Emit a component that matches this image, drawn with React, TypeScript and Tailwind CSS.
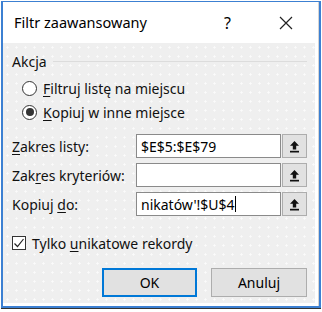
import React from 'react';

function RefButton() {
  return (
    <div className="w-[25px] h-[24px] ml-px flex items-center justify-center bg-[#e1e1e1] border border-[#adadad]">
      <svg width="11" height="13" viewBox="0 0 11 13">
        <path d="M5.5 1 L10 5.8 H7.2 V9.5 H3.8 V5.8 H1 Z" fill="#111" />
        <rect x="1" y="10.8" width="9" height="1.7" fill="#111" />
      </svg>
    </div>
  );
}

function Field({ label, value, caret }: { label: React.ReactNode; value?: string; caret?: boolean }) {
  return (
    <div className="flex items-center h-[24px]">
      <div className="w-[124px] text-[14px] text-[#111]">{label}</div>
      <div className="w-[145px] h-[24px] bg-white border border-[#8a8a8a] flex items-center pl-[4px] text-[14px] text-black">
        {value}
        {caret && <span className="inline-block w-px h-[16px] bg-black" />}
      </div>
      <RefButton />
    </div>
  );
}

function Radio({ checked, children }: { checked?: boolean; children: React.ReactNode }) {
  return (
    <div className="flex items-center h-[22px] ml-[10px]">
      <div className="w-[15px] h-[15px] rounded-full bg-white border border-[#333] flex items-center justify-center">
        {checked && <div className="w-[8px] h-[8px] rounded-full bg-[#333]" />}
      </div>
      <span className="ml-[6px] text-[14px] text-[#111]">{children}</span>
    </div>
  );
}

export default function App() {
  return (
    <div className="w-[322px] h-[312px] bg-white overflow-hidden font-['Noto_Sans',sans-serif]">
      <div className="ml-px mt-px w-[320px] h-[307px] flex bg-white border-l-2 border-r-2 border-t border-b-2 border-[#3c80d2]">
        <div className="flex-1 flex flex-col border-r border-[#d4d4d4]">
          {/* title bar */}
          <div className="h-[41px] flex items-center pl-[11px] text-[14.5px] text-black">
            <span>Filtr zaawansowany</span>
            <span className="ml-auto mr-[48px] text-[16px]">?</span>
            <svg width="14" height="14" viewBox="0 0 14 14" className="mr-[25px]">
              <path d="M1 1 L13 13 M13 1 L1 13" stroke="#222" strokeWidth="1.2" />
            </svg>
          </div>

          {/* body */}
          <div className="flex-1 mr-[3px] mb-[3px] bg-[#efefef] bg-[radial-gradient(circle,#fbfbfb_0.9px,transparent_1.2px)] bg-[length:9px_9px] pl-[9px] pr-[6px] pt-[8px] flex flex-col">
            <div className="flex items-center h-[20px]">
              <span className="text-[14px] text-[#111]">Akcja</span>
              <div className="flex-1 ml-[6px] mr-[2px] h-px bg-[#dcdcdc]" />
            </div>

            <div className="mt-[6px]">
              <Radio><u className="underline-offset-2">F</u>iltruj listę na miejscu</Radio>
            </div>
            <div className="mt-[2px]">
              <Radio checked><u className="underline-offset-2">K</u>opiuj w inne miejsce</Radio>
            </div>

            <div className="mt-[11px] flex flex-col gap-[5px]">
              <Field label={<><u className="underline-offset-2">Z</u>akres listy:</>} value="$E$5:$E$79" />
              <Field label={<>Zak<u className="underline-offset-2">r</u>es kryteriów:</>} />
              <Field label={<>Kopiuj <u className="underline-offset-2">d</u>o:</>} value="nikatów'!$U$4" caret />
            </div>

            <div className="mt-[17px] h-[20px] flex items-center">
              <div className="w-[14px] h-[14px] bg-white border border-[#333] flex items-center justify-center">
                <svg width="12" height="12" viewBox="0 0 12 12">
                  <path d="M1.5 6.5 L4.5 9.5 L10.5 2" stroke="#222" strokeWidth="1.2" fill="none" />
                </svg>
              </div>
              <span className="ml-[6px] text-[14px] text-[#111]">Tylko <u className="underline-offset-2">u</u>nikatowe rekordy</span>
            </div>

            <div className="mt-[15px] flex ml-[90px] gap-[14px]">
              <div className="w-[95px] h-[29px] bg-[#e1e1e1] border-2 border-[#0078d7] flex items-center justify-center text-[14px] text-black">OK</div>
              <div className="w-[96px] h-[29px] bg-[#e1e1e1] border border-[#adadad] flex items-center justify-center text-[14px] text-black">Anuluj</div>
            </div>
          </div>
        </div>
      </div>
      <div className="ml-px w-[320px] h-px bg-[#333]" />
    </div>
  );
}
